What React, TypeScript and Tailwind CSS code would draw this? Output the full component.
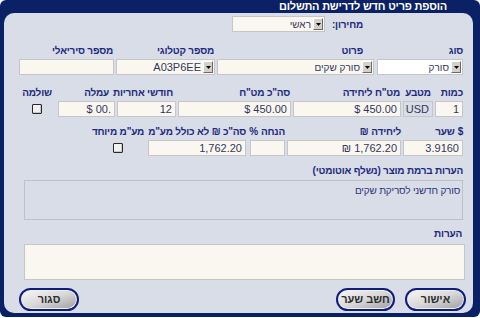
function Label({ children, className = "" }: { children: React.ReactNode; className?: string }) {
  return (
    <div className={`h-[12px] whitespace-nowrap text-[10px] font-bold leading-[12px] tracking-[-0.2px] text-[#1d2a7e] ${className}`}>
      {children}
    </div>
  );
}

// label built left-to-right so the symbol lands on the right side
function VisualLabel({ left, right }: { left: string; right: string }) {
  return (
    <div dir="ltr" className="flex h-[12px] justify-end gap-[3px] whitespace-nowrap text-[10px] font-bold leading-[12px] tracking-[-0.2px] text-[#1d2a7e]">
      <span>{left}</span>
      <span>{right}</span>
    </div>
  );
}

function Field({ value, className = "bg-[#faf7f1]" }: { value?: string; className?: string }) {
  return (
    <div className={`mt-[2px] h-[16px] overflow-hidden border border-[#c6c6c6] px-[3px] text-right text-[11px] leading-[14px] text-[#34375c] ${className}`}>
      {value && <span dir="ltr">{value}</span>}
    </div>
  );
}

function Arrow() {
  return (
    <div className="ml-[2px] mr-[1px] flex h-[12px] w-[10px] shrink-0 items-center justify-center border border-b-[#6b6b6b] border-l-white border-r-[#6b6b6b] border-t-white bg-[#d4d0c8]">
      <svg width="5" height="3" viewBox="0 0 5 3">
        <path d="M0 0h5L2.5 3z" fill="#000" />
      </svg>
    </div>
  );
}

function Select({ text, className }: { text: string; className: string }) {
  return (
    <div className={`flex h-[16px] items-center border border-[#c6c6c6] text-[#34375c] ${className}`}>
      <Arrow />
      <span className="whitespace-nowrap">{text}</span>
    </div>
  );
}

function Check() {
  return <div className="mt-[5px] h-[10px] w-[10px] rounded-[1px] border border-[#2a2a2a] bg-[#f2f2f2] shadow-[inset_-1px_-1px_0_#c8c8c8]" />;
}

function Btn({ children, className = "" }: { children: React.ReactNode; className?: string }) {
  return (
    <div
      className={`flex h-[23px] items-center justify-center rounded-full border-2 border-[#0f1d7d] bg-linear-to-br from-[#f8f8f8] via-[#d8d8d8] to-[#9f9f9f] text-[11px] font-bold text-[#2e2e2e] shadow-[inset_0_0_0_1px_#eef0f6] ${className}`}
    >
      {children}
    </div>
  );
}

export default function App() {
  return (
    <div dir="rtl" className="h-[318px] w-[480px] bg-white font-['Liberation_Sans',sans-serif]">
      <div className="flex h-[317px] flex-col rounded-[6px] bg-[#0b2166] pb-[4px] pl-[4px] pr-[7px]">
        <div className="h-[13px] pr-[26px] text-[11px] font-bold leading-[13px] tracking-[-0.2px] text-white">
          הוספת פריט חדש לדרישת התשלום
        </div>

        <div className="flex flex-1 flex-col rounded-[10px] bg-[#d9dde7] pr-[10px] pt-[3px]">
          {/* price list */}
          <div className="flex h-[16px] items-center">
            <div className="w-[100px] shrink-0" />
            <div className="w-[38px] shrink-0 text-[10px] font-bold tracking-[-0.2px] text-[#1d2a7e]">מחירון:</div>
            <Select text="ראשי" className="w-[93px] bg-[#faf7f1] text-[10px]" />
          </div>

          {/* type / details / catalog / serial */}
          <div className="mt-[13px] flex gap-[2px]">
            <div className="ml-[1px] w-[86px]">
              <Label>סוג</Label>
              <div className="mt-[2px]">
                <Select text="סורק" className="bg-white text-[10px]" />
              </div>
            </div>
            <div className="w-[157px]">
              <Label className="pr-[11px]">פרוט</Label>
              <div className="mt-[2px]">
                <Select text="סורק שקים" className="bg-[#faf7f1] text-[10px]" />
              </div>
            </div>
            <div className="w-[99px]">
              <Label className="pr-[1px]">מספר קטלוגי</Label>
              <div className="mt-[2px]">
                <Select text="A03P6EE" className="bg-[#faf7f1] text-[11px]" />
              </div>
            </div>
            <div className="w-[95px]">
              <Label className="pr-[1px]">מספר סיריאלי</Label>
              <Field />
            </div>
          </div>

          {/* quantity row */}
          <div className="mt-[12px] flex gap-[2px]">
            <div className="w-[28px]">
              <Label>כמות</Label>
              <Field value="1" />
            </div>
            <div className="w-[30px]">
              <Label className="text-center">מטבע</Label>
              <Field value="USD" className="bg-[#d9dde7] text-[#5a5d70]" />
            </div>
            <div className="w-[108px]">
              <Label className="pr-[1px]">מט"ח ליחידה</Label>
              <Field value="$ 450.00" />
            </div>
            <div className="w-[113px]">
              <Label className="pr-[1px]">סה"כ מט"ח</Label>
              <Field value="$ 450.00" />
            </div>
            <div className="w-[59px]">
              <Label className="pr-[3px]">חודשי אחריות</Label>
              <Field value="12" />
            </div>
            <div className="ml-[1px] w-[57px]">
              <Label className="pr-[6px]">עמלה</Label>
              <Field value="$ 00." />
            </div>
            <div className="flex w-[36px] flex-col items-center">
              <Label>שולמה</Label>
              <Check />
            </div>
          </div>

          {/* rate row */}
          <div className="mt-[9px] flex gap-[2px]">
            <div className="w-[60px]">
              <VisualLabel left="שער" right="$" />
              <Field value="3.9160" />
            </div>
            <div className="w-[114px]">
              <VisualLabel left="₪" right="ליחידה" />
              <Field value="₪ 1,762.20" />
            </div>
            <div className="ml-[2px] w-[35px]">
              <VisualLabel left="%" right="הנחה" />
              <Field />
            </div>
            <div className="w-[98px]">
              <Label>סה"כ ₪ לא כולל מע"מ</Label>
              <Field value="1,762.20" />
            </div>
            <div className="flex w-[56px] flex-col items-center">
              <Label>מע"מ מיוחד</Label>
              <Check />
            </div>
          </div>

          {/* product notes */}
          <div className="mt-[9px]">
            <Label>הערות ברמת מוצר (נשלף אוטומטי)</Label>
            <div className="ml-[20px] mt-[3px] h-[40px] border border-[#bfc1c7] bg-[#d9dde7] pr-[2px] pt-[2px] text-[10px] tracking-[-0.2px] text-[#2b3478]">
              סורק חדשני לסריקת שקים
            </div>
          </div>

          {/* notes */}
          <div className="mt-[8px]">
            <Label className="pr-[1px]">הערות</Label>
            <div className="-mr-[2px] ml-[20px] mt-[4px] h-[36px] border border-[#c6c6c6] bg-[#faf7f1]" />
          </div>

          {/* buttons */}
          <div className="-mr-[3px] mt-[8px] flex gap-[10px]">
            <Btn className="w-[61px]">אישור</Btn>
            <Btn className="w-[59px]">חשב שער</Btn>
            <Btn className="ml-[15px] mr-auto w-[60px]">סגור</Btn>
          </div>
        </div>
      </div>
    </div>
  );
}
